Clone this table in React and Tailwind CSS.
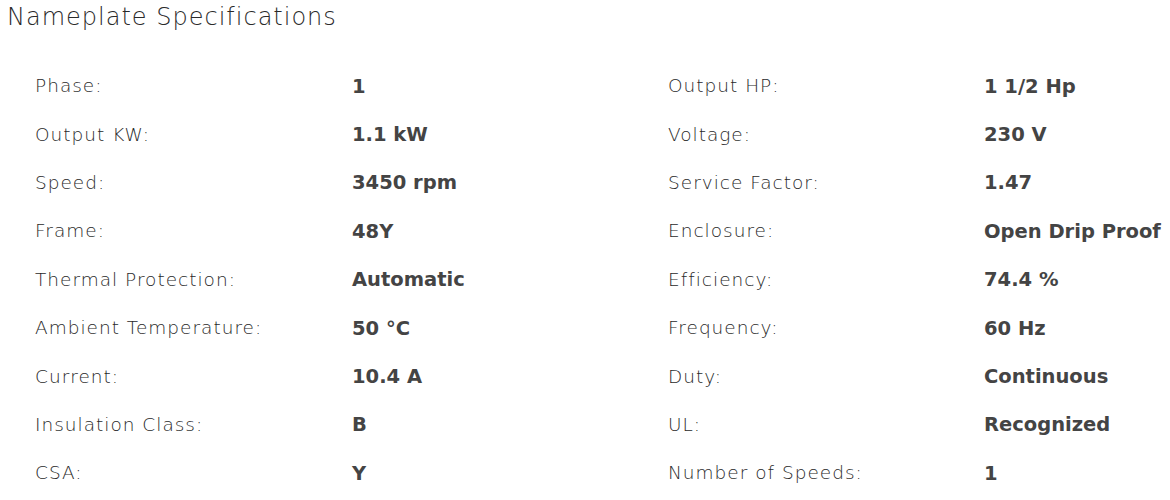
import React from "react";

const specs = [
  ["Phase:", "1", "Output HP:", "1 1/2 Hp"],
  ["Output KW:", "1.1 kW", "Voltage:", "230 V"],
  ["Speed:", "3450 rpm", "Service Factor:", "1.47"],
  ["Frame:", "48Y", "Enclosure:", "Open Drip Proof"],
  ["Thermal Protection:", "Automatic", "Efficiency:", "74.4 %"],
  ["Ambient Temperature:", "50 °C", "Frequency:", "60 Hz"],
  ["Current:", "10.4 A", "Duty:", "Continuous"],
  ["Insulation Class:", "B", "UL:", "Recognized"],
  ["CSA:", "Y", "Number of Speeds:", "1"],
];

const labelCls =
  "font-['DejaVu_Sans',sans-serif] font-extralight text-[18.5px] tracking-[1px] text-[#2a2a2a] whitespace-nowrap";
const valueCls =
  "font-['DejaVu_Sans',sans-serif] font-bold text-[19.5px] text-[#444] whitespace-nowrap";

const App = () => {
  return (
    <div className="w-[1170px] h-[500px] bg-white overflow-hidden">
      <h2 className="h-[62px] pl-[7px] pt-[1px] font-['DejaVu_Sans',sans-serif] font-extralight text-[24px] leading-[32px] tracking-[1px] text-[#2a2a2a]">
        Nameplate Specifications
      </h2>

      {/* spec table, two label/value pairs per row */}
      <div className="grid grid-cols-[317px_316px_316px_1fr] auto-rows-[48.4px] items-center pl-[35px]">
        {specs.map((row, i) => (
          <React.Fragment key={i}>
            <div className={labelCls}>{row[0]}</div>
            <div className={valueCls}>{row[1]}</div>
            <div className={labelCls}>{row[2]}</div>
            <div className={valueCls}>{row[3]}</div>
          </React.Fragment>
        ))}
      </div>
    </div>
  );
};

export default App;
